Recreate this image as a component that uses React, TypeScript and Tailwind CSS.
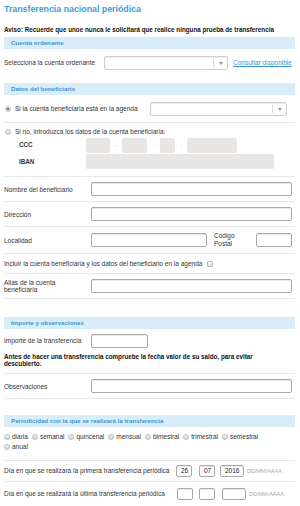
import React from 'react';

const font = { fontFamily: '"Liberation Sans", Arial, sans-serif' };

function Bar({ title, className = '' }: { title: string; className?: string }) {
  return (
    <div className={`h-[12px] bg-[#d9edf8] pl-[7px] flex items-center text-[6.2px] font-bold text-[#3a95cf] ${className}`}>
      {title}
    </div>
  );
}

function Select({ className = '' }: { className?: string }) {
  return (
    <div className={`h-[14px] bg-white border border-[#cfcfcf] rounded-[2px] flex justify-end shadow-[inset_0_1px_1px_rgba(0,0,0,0.08)] ${className}`}>
      <div className="w-[14px] border-l border-[#d8d8d8] my-[2px] flex items-center justify-center">
        <div className="w-0 h-0 border-l-[2px] border-r-[2px] border-t-[3px] border-l-transparent border-r-transparent border-t-[#999]" />
      </div>
    </div>
  );
}

function Input({ className = '', value }: { className?: string; value?: string }) {
  return (
    <div className={`bg-white border border-[#a9a9a9] rounded-[2px] shadow-[inset_0_1px_1px_rgba(0,0,0,0.1)] flex items-center pl-[4px] text-[6.5px] text-[#222] ${className}`}>
      {value}
    </div>
  );
}

function Radio({ checked = false }: { checked?: boolean }) {
  return (
    <span className="inline-flex w-[6px] h-[6px] rounded-full border border-[#bdbdbd] bg-gradient-to-b from-[#f4f4f4] to-[#d6d6d6] items-center justify-center shrink-0">
      {checked && <span className="w-[2px] h-[2px] rounded-full bg-[#444]" />}
    </span>
  );
}

function FieldRow({ label, children }: { label: React.ReactNode; children: React.ReactNode }) {
  return (
    <div className="flex items-center pt-[5px] pb-[5px] border-b border-[#e8e8e8]">
      <div className="w-[87px] text-[6.5px] leading-[7px] text-[#333]">{label}</div>
      {children}
    </div>
  );
}

const periods = ['diaria', 'semanal', 'quincenal', 'mensual', 'bimestral', 'trimestral', 'semestral', 'anual'];

export default function App() {
  return (
    <div className="w-[300px] h-[506px] bg-white overflow-hidden" style={font}>
      <div className="w-[291px] ml-[4px]">
        <div className="h-[20px] flex items-center text-[8.8px] font-bold text-[#3d9bd6]">
          Transferencia nacional periódica
        </div>
        <div className="mt-[6px] h-[8px] leading-[8px] text-[6.3px] font-bold text-[#111] whitespace-nowrap">
          Aviso: Recuerde que unoe nunca le solicitará que realice ninguna prueba de transferencia
        </div>

        <Bar title="Cuenta ordenante" className="mt-[3px]" />
        <div className="mt-[7px] flex items-center">
          <div className="w-[100px] text-[6.5px] text-[#333]">Selecciona la cuenta ordenante</div>
          <Select className="w-[124px]" />
          <a className="ml-[5px] text-[6.5px] text-[#3a95cf] underline">Consultar disponible</a>
        </div>

        <Bar title="Datos del beneficiario" className="mt-[13px]" />
        <div className="flex items-center pt-[7px] pb-[6px] border-b border-[#e8e8e8]">
          <div className="w-[146px] flex items-center gap-[4px] pl-[1px] text-[6.5px] text-[#333]">
            <Radio checked />
            Si la cuenta beneficiaria está en la agenda
          </div>
          <Select className="w-[137px]" />
        </div>
        <div className="pt-[5px] pb-[7px] border-b border-[#e8e8e8]">
          <div className="h-[8px] flex items-center gap-[4px] pl-[1px] text-[6.5px] text-[#333]">
            <Radio />
            Si no, introduzca los datos de la cuenta beneficiaria:
          </div>
          <div className="flex items-center h-[16px] mt-[1px]">
            <div className="w-[82px] pl-[15px] text-[6.3px] font-bold text-[#333]">CCC</div>
            <div className="w-[24px] h-[15px] bg-[#e9e7e6] rounded-[2px]" />
            <span className="w-[12px] text-center text-[6px] text-[#aaa]">-</span>
            <div className="w-[25px] h-[15px] bg-[#e9e7e6] rounded-[2px]" />
            <span className="w-[13px] text-center text-[6px] text-[#aaa]">-</span>
            <div className="w-[15px] h-[15px] bg-[#e9e7e6] rounded-[2px]" />
            <span className="w-[12px] text-center text-[6px] text-[#aaa]">-</span>
            <div className="w-[50px] h-[15px] bg-[#e9e7e6] rounded-[2px]" />
          </div>
          <div className="flex items-center h-[15px] mt-[1px]">
            <div className="w-[82px] pl-[15px] text-[6.3px] font-bold text-[#333]">IBAN</div>
            <div className="w-[188px] h-[15px] bg-[#e9e7e6] rounded-[2px]" />
          </div>
        </div>

        <FieldRow label="Nombre del beneficiario">
          <Input className="w-[201px] h-[14px]" />
        </FieldRow>
        <FieldRow label="Dirección">
          <Input className="w-[201px] h-[14px]" />
        </FieldRow>
        <FieldRow label="Localidad">
          <Input className="w-[116px] h-[14px]" />
          <div className="w-[49px] pl-[7px] text-[6.5px] leading-[8px] text-[#333]">
            Código
            <br />
            Postal
          </div>
          <Input className="w-[36px] h-[14px]" />
        </FieldRow>
        <div className="flex items-center h-[20px] border-b border-[#e8e8e8] text-[6.5px] text-[#333]">
          Incluir la cuenta beneficiaria y los datos del beneficiario en la agenda
          <span className="ml-[5px] w-[6px] h-[6px] rounded-[1px] border border-[#b9b9b9] bg-gradient-to-b from-[#fafafa] to-[#dedede]" />
        </div>
        <FieldRow label={<>Alias de la cuenta<br />beneficiaria</>}>
          <Input className="w-[201px] h-[14px]" />
        </FieldRow>

        <Bar title="Importe y observaciones" className="mt-[18px]" />
        <div className="flex items-center mt-[5px]">
          <div className="w-[87px] text-[6.5px] text-[#333]">Importe de la transferencia</div>
          <Input className="w-[57px] h-[14px]" />
        </div>
        <div className="pt-[5px] pb-[6px] border-b border-[#e8e8e8] text-[6.3px] leading-[7px] font-bold text-[#111]">
          Antes de hacer una transferencia compruebe la fecha valor de su saldo, para evitar
          <br />
          descubierto.
        </div>
        <FieldRow label="Observaciones">
          <Input className="w-[201px] h-[14px]" />
        </FieldRow>

        <Bar title="Periodicidad con la que se realizará la transferencia" className="mt-[16px]" />
        <div className="pt-[6px] pb-[10px] border-b border-[#e8e8e8]">
          <div className="w-[275px] flex flex-wrap gap-y-[3px]">
            {periods.map((p) => (
              <label key={p} className="flex items-center gap-[2px] mr-[4px] h-[7px] text-[6.5px] text-[#333]">
                <Radio />
                {p}
              </label>
            ))}
          </div>
        </div>
        <div className="flex items-center pt-[4px] pb-[4px] border-b border-[#e8e8e8]">
          <div className="w-[172px] text-[6.5px] text-[#333]">Día en que se realizará la primera transferencia periódica</div>
          <Input className="w-[16px] h-[12px]" value="26" />
          <Input className="w-[16px] h-[12px] ml-[7px]" value="07" />
          <Input className="w-[24px] h-[12px] ml-[5px]" value="2016" />
          <span className="ml-[3px] text-[5.5px] text-[#aaa]">DD/MM/AAAA</span>
        </div>
        <div className="flex items-center pt-[6px]">
          <div className="w-[173px] text-[6.5px] text-[#333]">Día en que se realizará la última transferencia periódica</div>
          <Input className="w-[16px] h-[12px]" />
          <Input className="w-[16px] h-[12px] ml-[6px]" />
          <Input className="w-[24px] h-[12px] ml-[7px]" />
          <span className="ml-[3px] text-[5.5px] text-[#aaa]">DD/MM/AAAA</span>
        </div>
      </div>
    </div>
  );
}
